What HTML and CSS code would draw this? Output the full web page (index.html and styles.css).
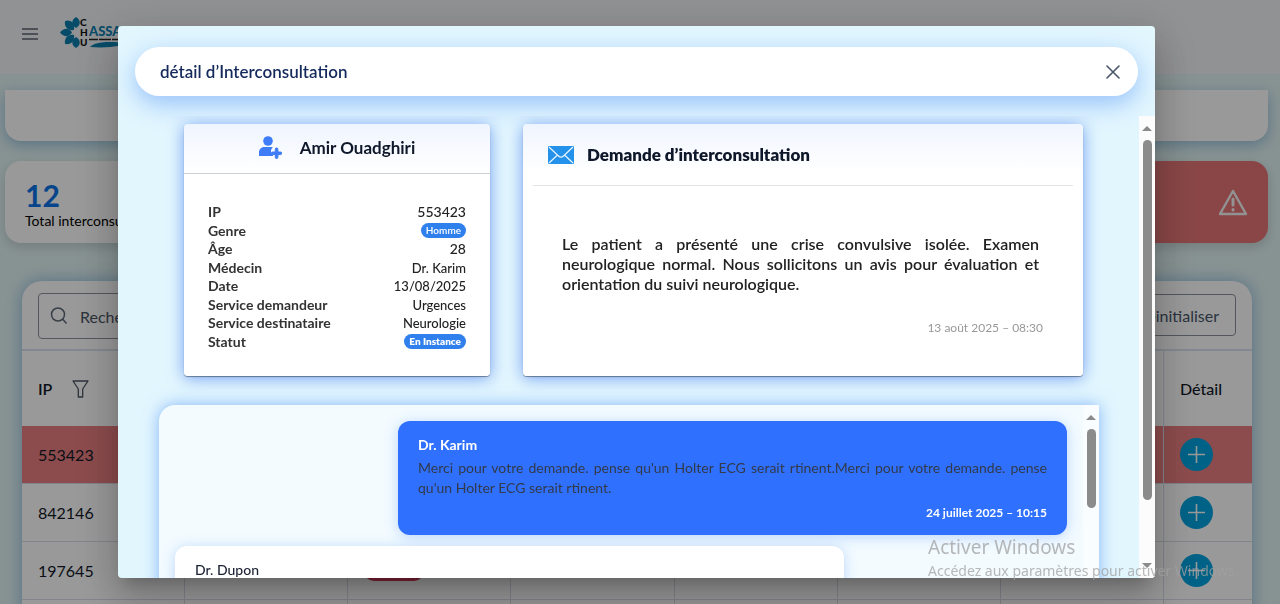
FILE: index.html
```html
<!DOCTYPE html>
<html lang="fr">
<head>
<meta charset="utf-8">
<meta name="viewport" content="width=device-width, initial-scale=1">
<title>Interconsultations</title>
<link rel="stylesheet" href="styles.css">
</head>
<body>
<div class="page">
  <header class="topbar">
    <button class="menu-btn" type="button" aria-label="Menu">
      <svg width="16" height="12" viewBox="0 0 16 12" fill="none" stroke="#5a6470" stroke-width="1.4"><path d="M0 1h16M0 6h16M0 11h16"/></svg>
    </button>
    <svg class="logo" width="100" height="34" viewBox="0 0 100 34" role="img" aria-label="CHU Hassan">
      <g fill="#0b7fae">
        <path d="M16 1c-5 3-5 8 0 11 5-3 5-8 0-11z"/>
        <path d="M5 5c6-2 10 2 9 9-6 1-10-3-9-9z"/>
        <path d="M0 16.500c4-5 9-5 12 0-3 5-8 5-12 0z"/>
        <path d="M5 28c-1-6 3-10 9-9 1 6-3 10-9 9z"/>
        <path d="M16 32c-5-3-5-8 0-11 5 3 5 8 0 11z"/>
        <path d="M30 31c6-6 20-6 50-3-18 0-28 5-50 3z"/>
      </g>
      <g class="logo-chu"><text x="20" y="10">C</text><text x="20" y="20">H</text><text x="20" y="30">U</text></g>
      <text class="logo-name" x="29" y="20">ASSAN II</text>
      <path d="M29 23.500h60" stroke="#222" stroke-width="1.500" stroke-dasharray="9 1 12 1"/>
    </svg>
  </header>

  <main class="content">
    <section class="panel"></section>
    <section class="stats">
      <article class="stat"><strong class="stat-value">12</strong><span class="stat-label">Total interconsultations</span></article>
      <article class="stat stat-alert">
        <svg width="30" height="27" viewBox="0 0 30 27" fill="none" stroke="#f4f4f4" stroke-width="2.4" stroke-linejoin="round" stroke-linecap="round"><path d="M15 2 28 25H2z"/><path d="M15 10v6M15 20.500v.5" stroke-width="3"/></svg>
      </article>
    </section>

    <section class="table-card">
      <div class="toolbar">
        <label class="search">
          <svg width="18" height="18" viewBox="0 0 18 18" fill="none" stroke="#5d6875" stroke-width="1.5"><circle cx="8" cy="7.500" r="6.500"/><path d="m12.500 12 4 4.500"/></svg>
          <input type="text" placeholder="Rechercher" aria-label="Rechercher">
        </label>
        <button class="reset" type="button">Réinitialiser</button>
      </div>
      <table class="grid">
        <thead><tr>
          <th scope="col"><span class="th-in">IP
            <svg width="17" height="18" viewBox="0 0 17 18" fill="none" stroke="#4b5563" stroke-width="1.300" stroke-linejoin="round"><path d="M1 1h15l-5.300 8v8H6.300V9z"/></svg></span></th>
          <th></th><th></th><th></th><th></th><th></th><th></th>
          <th scope="col" class="last">Détail</th>
        </tr></thead>
        <tbody>
          <tr class="urgent"><td>553423</td><td></td><td></td><td></td><td></td><td></td><td></td><td><button class="plus" type="button" aria-label="Détail 553423"><svg width="17" height="17" viewBox="0 0 17 17" stroke="#fff" stroke-width="1.600"><path d="M8.500 0v17M0 8.500h17"/></svg></button></td></tr>
          <tr><td>842146</td><td></td><td></td><td></td><td></td><td></td><td></td><td><button class="plus" type="button" aria-label="Détail 842146"><svg width="17" height="17" viewBox="0 0 17 17" stroke="#fff" stroke-width="1.600"><path d="M8.500 0v17M0 8.500h17"/></svg></button></td></tr>
          <tr><td>197645</td><td></td><td><span class="tag"></span></td><td></td><td></td><td></td><td></td><td><button class="plus" type="button" aria-label="Détail 197645"><svg width="17" height="17" viewBox="0 0 17 17" stroke="#fff" stroke-width="1.600"><path d="M8.500 0v17M0 8.500h17"/></svg></button></td></tr>
          <tr><td></td><td></td><td></td><td></td><td></td><td></td><td></td><td></td></tr>
        </tbody>
      </table>
    </section>
  </main>
</div>

<div class="overlay">
  <div class="modal" role="dialog" aria-modal="true" aria-labelledby="dlg-title">
    <div class="modal-head">
      <h1 id="dlg-title">détail d’Interconsultation</h1>
      <button class="close" type="button" aria-label="Fermer"><svg width="14" height="14" viewBox="0 0 14 14" stroke="#475569" stroke-width="1.600" stroke-linecap="round"><path d="m1 1 12 12M13 1 1 13"/></svg></button>
    </div>
    <div class="scroller">
      <div class="modal-body">
        <div class="cards">
          <section class="card patient">
            <header class="patient-head">
              <svg width="23" height="23" viewBox="0 0 23 23" fill="#3f7cf7"><circle cx="9" cy="5" r="4.800"/><path d="M0 20v-3.500C0 13 2.500 11 6 11h5.500c1.300 0 2 .3 2.500.7-1.300.6-2 1.600-2 3.300 0 2 .8 3.500 2 4.200V20z"/><path d="M16.300 13.200a1.200 1.200 0 0 1 2.600 0V16h2.600a1.300 1.300 0 0 1 0 2.600h-2.600v2.700a1.300 1.300 0 0 1-2.600 0v-2.700h-2.600a1.300 1.300 0 0 1 0-2.600h2.600z" stroke="#3f7cf7"/></svg>
              <h2>Amir Ouadghiri</h2>
            </header>
            <dl class="facts">
              <div><dt>IP</dt><dd class="strong">553423</dd></div>
              <div><dt>Genre</dt><dd><span class="pill">Homme</span></dd></div>
              <div><dt>Âge</dt><dd class="strong">28</dd></div>
              <div><dt>Médecin</dt><dd>Dr. Karim</dd></div>
              <div><dt>Date</dt><dd>13/08/2025</dd></div>
              <div><dt>Service demandeur</dt><dd>Urgences</dd></div>
              <div><dt>Service destinataire</dt><dd>Neurologie</dd></div>
              <div><dt>Statut</dt><dd><span class="pill pill-bold">En Instance</span></dd></div>
            </dl>
          </section>
          <section class="card request">
            <header class="request-head">
              <svg width="26" height="18" viewBox="0 0 26 18"><rect width="26" height="18" rx="1" fill="#2492ea"/><path d="m1 1 9.500 9c1.600 1.500 3.400 1.500 5 0L25 1M1 17l8.500-8M25 17l-8.500-8" fill="none" stroke="#e8f5ff" stroke-width="1.200"/></svg>
              <h2>Demande d’interconsultation</h2>
            </header>
            <p class="request-text">Le patient a présenté une crise convulsive isolée. Examen neurologique normal. Nous sollicitons un avis pour évaluation et orientation du suivi neurologique.</p>
            <time class="request-date">13 août 2025 – 08:30</time>
          </section>
        </div>
        <section class="chat">
          <div class="messages">
            <article class="bubble mine">
              <h3>Dr. Karim</h3>
              <p>Merci pour votre demande. pense qu'un Holter ECG serait rtinent.Merci pour votre demande. pense qu'un Holter ECG serait rtinent.</p>
              <time>24 juillet 2025 – 10:15</time>
            </article>
            <article class="bubble">
              <h3>Dr. Dupon</h3>
            </article>
          </div>
          <div class="bar"><span class="arrow up"></span><span class="thumb thumb-short"></span></div>
        </section>
      </div>
      <div class="bar"><span class="arrow up"></span><span class="thumb"></span><span class="arrow down"></span></div>
    </div>
  </div>
</div>

<aside class="watermark"><p class="wm-title">Activer Windows</p><p>Accédez aux paramètres pour activer Windows.</p></aside>
</body>
</html>
```
FILE: styles.css
```css
* { box-sizing: border-box; }
html, body { height: 100%; }
body { margin: 0; overflow: hidden; font-family: Lato, "Open Sans", sans-serif; font-size: 14px; color: #1f2937; }
h1, h2, h3, p, dl, dd { margin: 0; }
button { font: inherit; border: 0; background: none; padding: 0; cursor: pointer; }

.page { height: 100%; overflow: hidden; display: flex; flex-direction: column; background: #e2f4f4; }
.topbar { flex: none; height: 74px; padding: 0 22px; display: flex; align-items: flex-start; gap: 22px; background: #f2f3f6; }
.menu-btn { display: flex; margin-top: 28px; }
.logo { margin-top: 16px; flex: none; }
.logo-chu { font-size: 10px; font-weight: 900; fill: #111; }
.logo-name { font-size: 13px; font-weight: 900; fill: #0b7fae; }

.content { padding: 16px 12px 0 5px; display: flex; flex-direction: column; gap: 20px; }
.panel { height: 51px; background: #fff; border-radius: 0 0 16px 16px; box-shadow: 0 4px 14px rgba(59, 130, 190, .45); }
.stats { display: grid; grid-template-columns: repeat(4, 1fr); gap: 16px; }
.stat { height: 82px; padding: 16px 20px; border-radius: 16px; background: #fff; display: flex; flex-direction: column; box-shadow: 0 4px 12px rgba(0, 0, 0, .15); }
.stat:last-child { grid-column: 4; }
.stat-value { font-size: 30px; line-height: 36px; color: #0b74e8; }
.stat-label { font-size: 14px; line-height: 16px; color: #000; white-space: nowrap; }
.stat-alert { background: #e67677; align-items: flex-end; justify-content: center; }

.table-card { margin: 18px 16px 0 17px; background: #fff; border-radius: 20px 20px 0 0; box-shadow: 0 0 16px rgba(70, 140, 200, .55); overflow: hidden; }
.toolbar { height: 70px; padding: 12px 16px; display: flex; justify-content: space-between; align-items: flex-start; border-bottom: 2px solid #dbe3f0; }
.search { width: 300px; height: 46px; display: flex; align-items: center; gap: 12px; padding: 0 11px; border: 1px solid #8a929c; border-radius: 4px; }
.search input { border: 0; outline: 0; background: none; min-width: 0; padding: 0; font: inherit; font-size: 16px; }
.search input::placeholder { color: #4b5563; opacity: 1; }
.reset { height: 42px; margin-top: 1px; padding: 0 16px; border: 1px solid #8a929c; border-radius: 4px; font-size: 16px; color: #475569; }
.grid { width: 100%; border-collapse: separate; border-spacing: 0; table-layout: fixed; font-size: 16px; }
.grid th, .grid td { height: 58px; padding: 0 16px; text-align: left; border-right: 1px solid #d9dde8; border-bottom: 1px solid #d9dde8; color: #111827; }
.grid th { height: 75px; border-bottom: 0; font-weight: 600; }
.grid th.last { width: 88px; font-weight: 500; }
.grid th:last-child, .grid td:last-child { border-right: 0; }
.th-in { display: flex; align-items: center; gap: 20px; }
.urgent td { background: #ea7f80; }
.plus { width: 33px; height: 33px; border-radius: 50%; background: #00a3e0; display: flex; align-items: center; justify-content: center; }
.tag { display: block; width: 60px; height: 20px; border-radius: 10px; background: #d6385a; }

.overlay { position: fixed; inset: 0; padding: 26px 125px 26px 118px; display: flex; background: rgba(0, 0, 0, .4); }
.modal { flex: 1; min-width: 0; display: flex; flex-direction: column; overflow: hidden; border-radius: 4px; background: #e2f6fe; box-shadow: 0 11px 15px -7px rgba(0, 0, 0, .2), 0 24px 38px 3px rgba(0, 0, 0, .14), 0 9px 46px 8px rgba(0, 0, 0, .12); }
.modal-head { flex: none; margin: 21px 17px 20px; height: 49px; padding: 0 18px 0 25px; display: flex; align-items: center; justify-content: space-between; border-radius: 25px; background: #fff; box-shadow: 0 8px 24px rgba(59, 130, 246, .45); }
.modal-head h1 { font-size: 17px; line-height: 20px; font-weight: 600; color: #142a5c; }
.close { display: flex; }
.scroller { flex: 1; min-height: 0; display: flex; overflow: hidden; }
.modal-body { flex: 1; min-width: 0; overflow: hidden; padding: 8px 40px 0 41px; }
.cards { display: grid; grid-template-columns: 306fr 560fr; gap: 33px; padding: 0 16px 0 25px; }
.card { min-height: 252px; border-radius: 4px; display: flex; flex-direction: column; background: linear-gradient(#eff5ff, #fff 48px); box-shadow: 0 1px 1px rgba(0, 0, 0, .4), 0 2px 16px rgba(37, 99, 235, .6); }
.card h2 { font-size: 17px; line-height: 20px; font-weight: 700; color: #0f172a; }
.patient-head { height: 50px; padding-bottom: 2px; display: flex; align-items: center; justify-content: center; gap: 18px; border-bottom: 1px solid #cdd1d8; }
.facts { flex: 1; padding: 29px 24px 25px; display: flex; flex-direction: column; }
.facts div { flex: 1; display: flex; align-items: center; justify-content: space-between; line-height: 18px; }
.facts dt { font-weight: 700; color: #333; }
.facts dd { color: #222; display: flex; font-size: 13px; font-weight: 500; }
.facts .strong { font-size: 14px; }
.pill { padding: 0 5px; line-height: 15px; border-radius: 8px; background: #2f7fec; color: #fff; font-size: 10px; font-weight: 600; }
.pill-bold { font-weight: 800; }
.request { padding: 0 10px; }
.request h2 { font-weight: 800; }
.request-head { height: 62px; padding: 0 15px; display: flex; align-items: center; gap: 13px; border-bottom: 1px solid #e2e4e8; }
.request-text { padding: 48px 34px 0 29px; font-size: 16px; line-height: 20px; font-weight: 600; color: #222; text-align: justify; }
.request-date { padding: 26px 30px 0; text-align: right; font-size: 12px; line-height: 16px; color: #999; }

.chat { margin-top: 29px; height: 400px; display: flex; background: #f3fbff; border-radius: 16px 0 0 0; box-shadow: 0 0 16px rgba(59, 130, 246, .55); }
.messages { flex: 1; min-width: 0; padding: 16px; display: flex; flex-direction: column; gap: 11px; }
.bubble { width: 75%; min-height: 114px; padding: 16px 20px 14px; border-radius: 12px; background: #fff; box-shadow: 0 2px 14px rgba(59, 130, 246, .3); }
.bubble h3 { font-size: 14px; font-weight: 500; line-height: 16px; color: #1b2234; }
.bubble p { margin: 5px 0 7px; line-height: 20px; text-align: justify; color: #333a48; }
.bubble time { display: block; text-align: right; font-size: 12px; font-weight: 700; line-height: 16px; }
.mine { align-self: flex-end; background: #2f70ff; color: #fff; }
.mine h3 { font-weight: 700; color: #fff; }

.bar { flex: none; width: 16px; padding: 10px 0; display: flex; flex-direction: column; align-items: center; background: #fcfcfc; }
.arrow { border: 5px solid transparent; }
.up { border-top: 0; border-bottom-color: #8a8a8a; }
.down { border-bottom: 0; border-top-color: #8a8a8a; margin-top: auto; }
.thumb { width: 9px; height: 360px; margin-top: 9px; border-radius: 5px; background: #8b8b8b; }
.thumb-short { height: 79px; }
.chat .bar { background: #fafdff; }

.watermark { position: fixed; left: 928px; bottom: 22px; font-family: "Noto Sans", "Open Sans", sans-serif; font-size: 14px; line-height: 22px; color: rgba(160, 160, 160, .75); pointer-events: none; white-space: nowrap; }
.wm-title { font-size: 19px; line-height: 26px; }
```
